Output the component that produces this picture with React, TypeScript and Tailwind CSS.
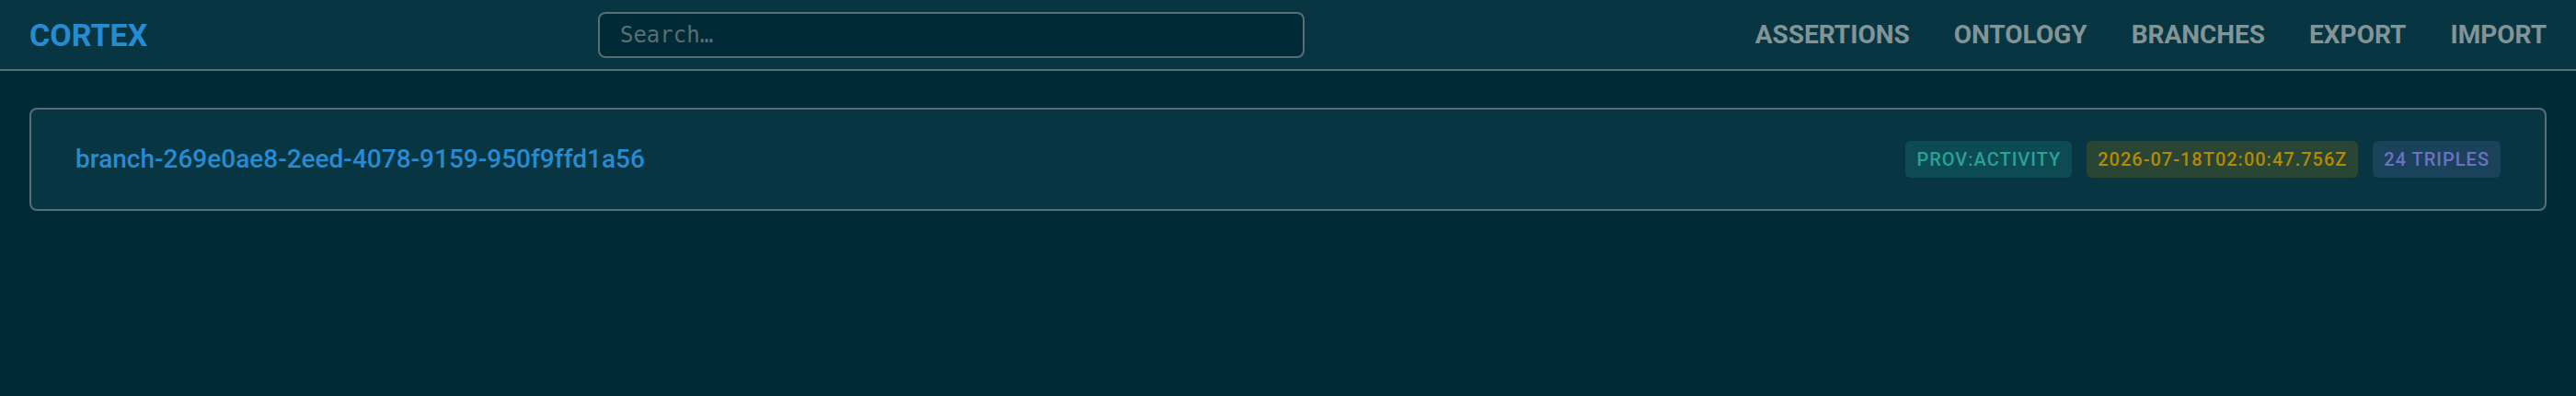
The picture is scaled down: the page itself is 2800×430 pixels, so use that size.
import React from "react";

const NAV_ITEMS = ["ASSERTIONS", "ONTOLOGY", "BRANCHES", "EXPORT", "IMPORT"];

type Branch = {
  id: string;
  type: string;
  createdAt: string;
  triples: number;
};

const BRANCHES: Branch[] = [
  {
    id: "branch-269e0ae8-2eed-4078-9159-950f9ffd1a56",
    type: "prov:Activity",
    createdAt: "2026-07-18T02:00:47.756Z",
    triples: 24,
  },
];

function Header() {
  return (
    <header className="flex h-[77px] items-center justify-between border-b-2 border-[#586e75] bg-[#073642] px-8">
      <div className="text-[34px] font-bold leading-none text-[#268bd2]">
        CORTEX
      </div>

      <input
        type="text"
        placeholder="Search…"
        className="h-[50px] w-[768px] rounded-lg border-2 border-[#586e75] bg-[#002b36] px-[22px] font-['DejaVu_Sans_Mono',monospace] text-[24px] text-[#93a1a1] placeholder:text-[#586e75] outline-none"
      />

      <nav className="flex items-center gap-12">
        {NAV_ITEMS.map((item) => (
          <a
            key={item}
            href="#"
            className="text-[28px] font-bold leading-none text-[#839496]"
          >
            {item}
          </a>
        ))}
      </nav>
    </header>
  );
}

function Badge({ label, tone }: { label: string; tone: "cyan" | "yellow" | "violet" }) {
  const tones = {
    cyan: "bg-[#2aa198]/20 text-[#2aa198]",
    yellow: "bg-[#b58900]/20 text-[#b58900]",
    violet: "bg-[#6c71c4]/20 text-[#6c71c4]",
  };

  return (
    <span
      className={`rounded-md px-3 py-1.5 text-[20px] font-medium uppercase leading-[28px] tracking-[1px] ${tones[tone]}`}
    >
      {label}
    </span>
  );
}

function BranchCard({ branch }: { branch: Branch }) {
  return (
    <div className="flex items-center justify-between rounded-lg border-2 border-[#586e75] bg-[#073642] px-12 py-8">
      <a
        href="#"
        className="flex h-[44px] items-center text-[28px] font-medium text-[#268bd2]"
      >
        {branch.id}
      </a>

      <div className="flex items-center gap-4">
        <Badge label={branch.type} tone="cyan" />
        <Badge label={branch.createdAt} tone="yellow" />
        <Badge label={`${branch.triples} triples`} tone="violet" />
      </div>
    </div>
  );
}

export default function App() {
  return (
    <div className="min-h-[430px] bg-[#002b36] font-['Roboto',sans-serif]">
      <Header />

      <main className="mx-8 mt-10 space-y-4">
        {BRANCHES.map((b) => (
          <BranchCard key={b.id} branch={b} />
        ))}
      </main>
    </div>
  );
}
